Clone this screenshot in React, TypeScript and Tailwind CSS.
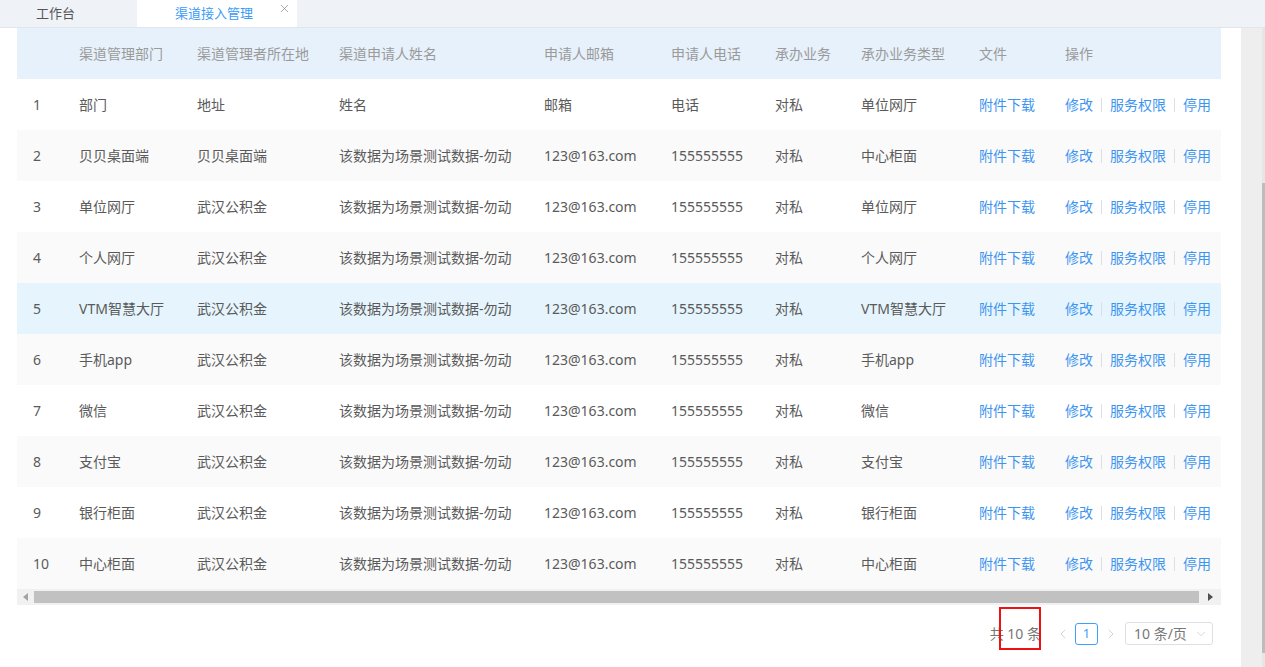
import React from 'react';
import { X, ChevronLeft, ChevronRight, ChevronDown } from 'lucide-react';

const headers = ['', '渠道管理部门', '渠道管理者所在地', '渠道申请人姓名', '申请人邮箱', '申请人电话', '承办业务', '承办业务类型', '文件', '操作'];

const rows = [
    ['部门', '地址', '姓名', '邮箱', '电话', '对私', '单位网厅'],
    ['贝贝桌面端', '贝贝桌面端', '该数据为场景测试数据-勿动', '123@163.com', '155555555', '对私', '中心柜面'],
    ['单位网厅', '武汉公积金', '该数据为场景测试数据-勿动', '123@163.com', '155555555', '对私', '单位网厅'],
    ['个人网厅', '武汉公积金', '该数据为场景测试数据-勿动', '123@163.com', '155555555', '对私', '个人网厅'],
    ['VTM智慧大厅', '武汉公积金', '该数据为场景测试数据-勿动', '123@163.com', '155555555', '对私', 'VTM智慧大厅'],
    ['手机app', '武汉公积金', '该数据为场景测试数据-勿动', '123@163.com', '155555555', '对私', '手机app'],
    ['微信', '武汉公积金', '该数据为场景测试数据-勿动', '123@163.com', '155555555', '对私', '微信'],
    ['支付宝', '武汉公积金', '该数据为场景测试数据-勿动', '123@163.com', '155555555', '对私', '支付宝'],
    ['银行柜面', '武汉公积金', '该数据为场景测试数据-勿动', '123@163.com', '155555555', '对私', '银行柜面'],
    ['中心柜面', '武汉公积金', '该数据为场景测试数据-勿动', '123@163.com', '155555555', '对私', '中心柜面'],
];

const cols = 'grid grid-cols-[46px_118px_142px_205px_127px_104px_86px_118px_86px_172px]';

const App: React.FC = () => {
    return (
        <div
            className="relative w-[1265px] h-[667px] overflow-hidden bg-white text-[14px] flex flex-col"
            style={{ fontFamily: '"Noto Sans", "Noto Sans CJK SC", sans-serif' }}
        >
            {/* Tabs */}
            <div className="h-[28px] shrink-0 bg-[#eff2f7] border-b border-[#e2e5ea] flex">
                <div className="w-[137px] pl-[36px] flex items-center text-[13px] text-[#555]">工作台</div>
                <div className="w-[160px] bg-white relative flex items-center pl-[38px] text-[13px] text-[#3a9bf7]">
                    渠道接入管理
                    <X size={13} strokeWidth={1.3} className="absolute right-[6px] top-[2px] text-[#888]" />
                </div>
            </div>

            <div className="flex flex-1 min-h-0">
                {/* Main */}
                <div className="flex-1 pl-[17px] pr-[20px] flex flex-col">
                    <div className="w-[1204px]">
                        <div className={`${cols} h-[51px] bg-[#e7f1fc] text-[#9a9a9a]`}>
                            {headers.map((h, i) => (
                                <div key={i} className="pl-[16px] flex items-center whitespace-nowrap">{h}</div>
                            ))}
                        </div>
                        {rows.map((r, i) => {
                            const bg = i === 4 ? 'bg-[#e6f5fd]' : i % 2 === 1 ? 'bg-[#fafafa]' : 'bg-white';
                            return (
                                <div key={i} className={`${cols} h-[51px] ${bg} text-[#5a5a5a]`}>
                                    <div className="pl-[16px] flex items-center">{i + 1}</div>
                                    {r.map((c, j) => (
                                        <div key={j} className="pl-[16px] flex items-center whitespace-nowrap">{c}</div>
                                    ))}
                                    <div className="pl-[16px] flex items-center whitespace-nowrap text-[#3d95f0]">附件下载</div>
                                    <div className="pl-[16px] flex items-center whitespace-nowrap text-[#3d95f0] gap-[8px]">
                                        <span>修改</span>
                                        <span className="w-px h-[14px] bg-[#dcdfe6]" />
                                        <span>服务权限</span>
                                        <span className="w-px h-[14px] bg-[#dcdfe6]" />
                                        <span>停用</span>
                                    </div>
                                </div>
                            );
                        })}

                        {/* Horizontal scrollbar */}
                        <div className="h-[16px] bg-[#f1f1f1] flex items-center">
                            <div className="w-[17px] flex justify-center">
                                <svg width="6" height="8" viewBox="0 0 6 8"><path d="M5 0 L0 4 L5 8 Z" fill="#a3a3a3" /></svg>
                            </div>
                            <div className="flex-1 h-[12px] bg-[#c1c1c1]" />
                            <div className="w-[22px] flex justify-center">
                                <svg width="6" height="8" viewBox="0 0 6 8"><path d="M1 0 L6 4 L1 8 Z" fill="#505050" /></svg>
                            </div>
                        </div>
                    </div>

                    {/* Pagination */}
                    <div className="w-[1204px] flex justify-end items-center pr-[8px] mt-[17px] text-[#777]">
                        <span className="mr-[14px]">共 10 条</span>
                        <ChevronLeft size={16} strokeWidth={1.1} className="text-[#c0c4cc] mr-[4px]" />
                        <div className="w-[23px] h-[22px] border border-[#409eff] rounded-[3px] text-[#409eff] flex items-center justify-center text-[13px]">1</div>
                        <ChevronRight size={16} strokeWidth={1.1} className="text-[#c0c4cc] ml-[5px] mr-[6px]" />
                        <div className="w-[88px] h-[23px] border border-[#dcdfe6] rounded-[3px] flex items-center pl-[8px] pr-[4px] justify-between">
                            <span>10 条/页</span>
                            <ChevronDown size={14} strokeWidth={1.1} className="text-[#c0c4cc]" />
                        </div>
                    </div>
                </div>

                {/* Page scrollbar */}
                <div className="w-[24px] bg-[#eeeeee] flex justify-end">
                    <div className="w-[3px] bg-[#e6e6e6] flex flex-col">
                        <div className="h-[155px]" />
                        <div className="h-[470px] bg-[#bdbdbd]" />
                    </div>
                </div>
            </div>

            {/* Annotation box */}
            <div className="absolute left-[999px] top-[607px] w-[42px] h-[43px] border-2 border-[#ee1111]" />
        </div>
    );
};

export default App;
